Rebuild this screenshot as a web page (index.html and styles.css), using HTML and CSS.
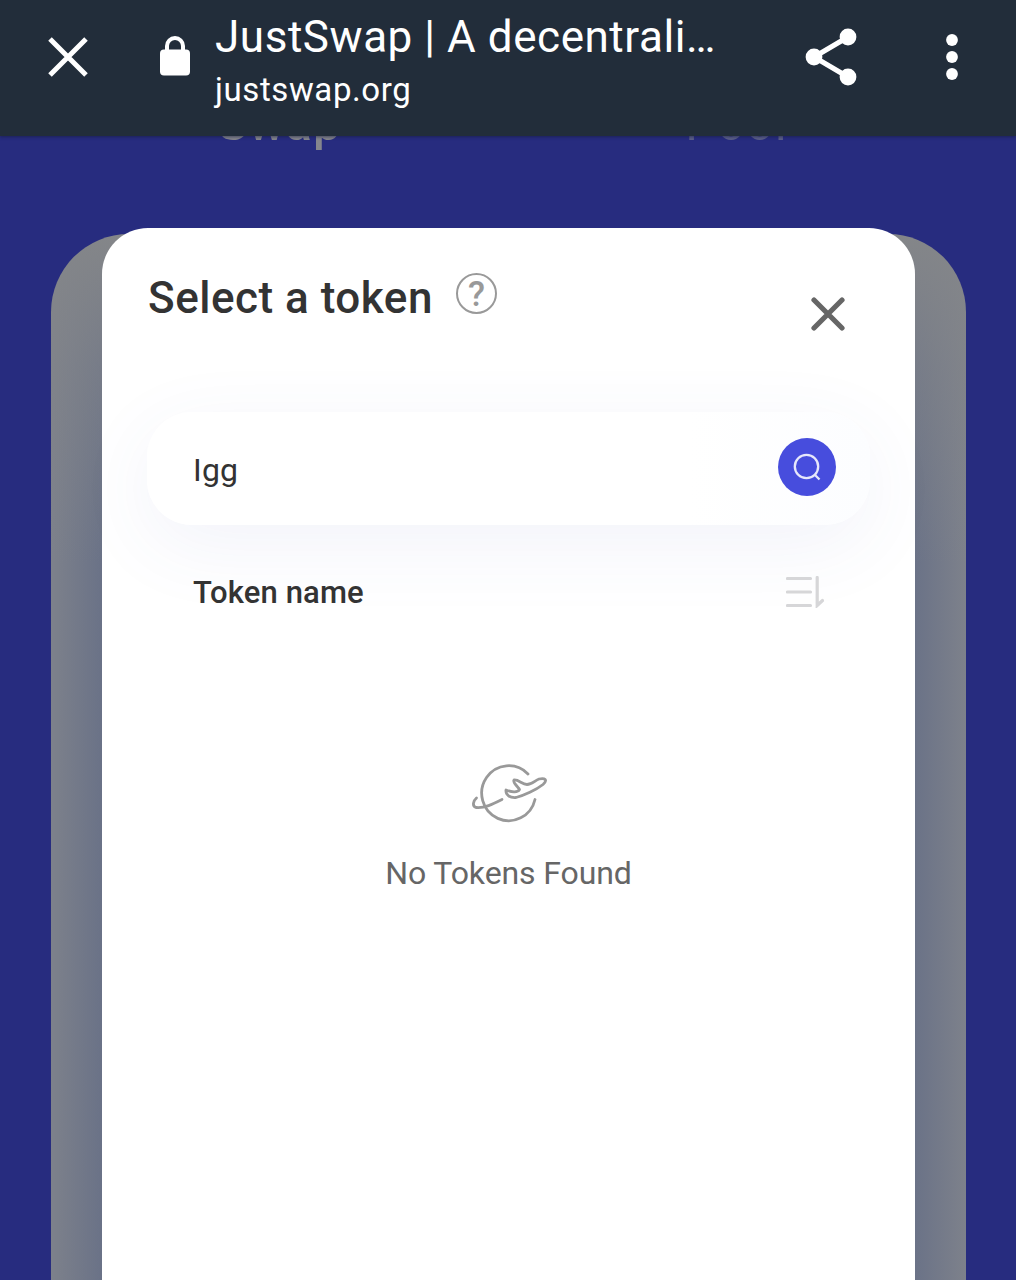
FILE: index.html
```html
<!DOCTYPE html>
<html lang="en">
<head>
  <meta charset="UTF-8" />
  <meta name="viewport" content="width=device-width, initial-scale=1.0" />
  <title>JustSwap | A decentralized protocol</title>
  <link rel="stylesheet" href="styles.css">
</head>
<body>
  <header class="browser-bar">
    <svg class="bar-close" viewBox="0 0 40 40"><path d="M2 2 38 38M38 2 2 38" /></svg>
    <svg class="bar-lock" viewBox="0 0 32 40">
      <path class="shackle" d="M8 16V10a8 8 0 0 1 16 0v6" />
      <rect x="1" y="13.5" width="30" height="26" rx="4" />
    </svg>
    <div class="bar-text">
      <div class="bar-title">JustSwap | A decentrali…</div>
      <div class="bar-url">justswap.org</div>
    </div>
    <svg class="bar-share" viewBox="0 0 52 58">
      <path d="M43 9 9 29 43 49" />
      <circle cx="43" cy="9" r="8.4" />
      <circle cx="9" cy="29" r="8.4" />
      <circle cx="43" cy="49" r="8.4" />
    </svg>
    <svg class="bar-menu" viewBox="0 0 12 46">
      <circle cx="6" cy="6" r="5.9" />
      <circle cx="6" cy="23" r="5.9" />
      <circle cx="6" cy="40" r="5.9" />
    </svg>
  </header>

  <main class="page">
    <nav class="tabs">
      <a class="tab active">Swap</a>
      <a class="tab">Pool</a>
    </nav>
    <div class="swap-card"></div>

    <section class="modal">
      <div class="modal-head">
        <h2>Select a token</h2>
        <span class="help">?</span>
        <svg class="modal-close" viewBox="0 0 34 34"><path d="M3 3 31 31M31 3 3 31" /></svg>
      </div>

      <div class="search">
        <span class="search-text">Igg</span>
        <button class="search-btn">
          <svg viewBox="0 0 28 28"><circle cx="13.5" cy="13.5" r="11.7" /><path d="M22 22 26.5 26.5" /></svg>
        </button>
      </div>

      <div class="list-head">
        <span>Token name</span>
        <svg class="sort" viewBox="0 0 38 32"><path d="M1.5 2.5H24.5M1.5 16H24.5M1.5 29.5H24.5M31.2 1.5V29.5L36.5 24.5" /></svg>
      </div>

      <div class="empty">
        <svg viewBox="0 0 76 60">
          <path d="M57 10A27 27.5 0 1 0 64 35.5" />
          <path d="M5.500 34C2 37 1 42 5 43.500C13 44.500 22 40 31 35.500" />
          <path d="M35 26C34.500 31 39 34 45 33.500C53 31.500 65 26 72 20.500C77 16 74 13.500 68 15C64 16.500 61 20.500 56 20.500C51 20.500 48 15.500 43 16C41 18.500 48 23.500 48.500 25.500C47 29 40 28 35 26Z" />
        </svg>
        <p>No Tokens Found</p>
      </div>
    </section>
  </main>
</body>
</html>
```
FILE: styles.css
```css
* {
  box-sizing: border-box;
}
body {
  margin: 0;
  height: 1280px;
  overflow: hidden;
  font-family: Roboto, sans-serif;
  background: #272c7f;
  color: #333;
}
svg {
  display: block;
  flex: none;
  fill: none;
}

/* browser bar */
.browser-bar {
  position: relative;
  z-index: 2;
  display: flex;
  height: 136px;
  padding: 0 58px 0 48px;
  background: #222d3a;
  box-shadow: 0 1px 3px rgba(20, 25, 60, 0.6);
  color: #fff;
}
.bar-close {
  width: 40px;
  height: 40px;
  margin-top: 37px;
  stroke: #fff;
  stroke-width: 5;
}
.bar-lock {
  width: 32px;
  height: 40px;
  margin: 36px 0 0 71px;
  fill: #fff;
}
.shackle {
  fill: none;
  stroke: #fff;
  stroke-width: 4;
}
.bar-text {
  width: 500px;
  margin-left: 24px;
  padding-top: 11px;
  white-space: nowrap;
}
.bar-title {
  font-size: 44px;
  line-height: 52px;
  letter-spacing: 0.55px;
}
.bar-url {
  margin-top: 7px;
  font-size: 33px;
  line-height: 40px;
  letter-spacing: 0.6px;
}
.bar-share {
  width: 52px;
  height: 58px;
  margin: 28px 0 0 90px;
  fill: #fff;
}
.bar-share path {
  fill: none;
  stroke: #fff;
  stroke-width: 5;
}
.bar-menu {
  width: 12px;
  height: 46px;
  margin: 34px 0 0 89px;
  fill: #fff;
}

/* page behind the modal */
.page {
  position: relative;
  height: 1144px;
  overflow: hidden;
}
.tabs {
  display: flex;
  height: 98px;
  padding: 0 51px;
}
.tab {
  flex: 1;
  margin-top: -39px;
  font-size: 49px;
  line-height: 54px;
  letter-spacing: 1px;
  text-align: center;
  color: #5c608a;
}
.tab.active {
  color: #85868d;
  font-weight: 500;
}
.swap-card {
  height: 1200px;
  margin: 0 50px 0 51px;
  border-radius: 78px;
  background:
    linear-gradient(#848689 0, rgba(132, 134, 137, 0.5) 130px, rgba(132, 134, 137, 0) 330px),
    linear-gradient(90deg, #7d818b 0, #6a7287 51px, #6a7287 863px, #7d818b 914px);
}

/* token modal */
.modal {
  position: absolute;
  top: 92px;
  left: 102px;
  width: 813px;
  height: 1100px;
  padding: 0 45px;
  border-radius: 46px;
  background: #fff;
}
.modal-head {
  display: flex;
  height: 184px;
  padding: 43px 25px 0 1px;
}
h2 {
  margin: 0;
  font-size: 44px;
  font-weight: 500;
  line-height: 54px;
  letter-spacing: 0.5px;
}
.help {
  width: 41px;
  height: 41px;
  margin: 2px auto 0 23px;
  border: 2px solid #999;
  border-radius: 50%;
  color: #999;
  font-size: 35px;
  font-weight: 500;
  line-height: 40px;
  text-align: center;
}
.modal-close {
  width: 34px;
  height: 34px;
  margin-top: 26px;
  stroke: #666;
  stroke-width: 5.2;
  stroke-linecap: round;
}
.search {
  display: flex;
  justify-content: space-between;
  height: 113px;
  padding: 26px 34px 0 46px;
  border-radius: 45px;
  background: linear-gradient(90deg, #fff 75%, #fcfdff);
  box-shadow: 0 20px 80px rgba(70, 90, 180, 0.07);
}
.search-text {
  padding-top: 13px;
  font-size: 32px;
  line-height: 38px;
  letter-spacing: 0.2px;
}
.search-btn {
  display: flex;
  align-items: center;
  justify-content: center;
  width: 58px;
  height: 58px;
  padding: 0;
  border: 0;
  border-radius: 50%;
  background: #474ddd;
}
.search-btn svg {
  width: 28px;
  height: 28px;
  stroke: #e6e7fb;
  stroke-width: 2.3;
}
.list-head {
  display: flex;
  justify-content: space-between;
  padding: 49px 46px 0 46px;
  font-size: 31px;
  font-weight: 500;
  line-height: 38px;
  letter-spacing: 0.15px;
}
.sort {
  width: 38px;
  height: 32px;
  margin-top: 2px;
  stroke: #d6d6d8;
  stroke-width: 3.2;
  stroke-linecap: round;
}
.empty {
  display: flex;
  flex-direction: column;
  align-items: center;
  padding-top: 152px;
  color: #666;
}
.empty svg {
  width: 76px;
  height: 60px;
  stroke: #999;
  stroke-width: 2.8;
  stroke-linecap: round;
  stroke-linejoin: round;
}
.empty p {
  margin: 30px 0 0;
  font-size: 32px;
  line-height: 38px;
  letter-spacing: -0.1px;
}
```
